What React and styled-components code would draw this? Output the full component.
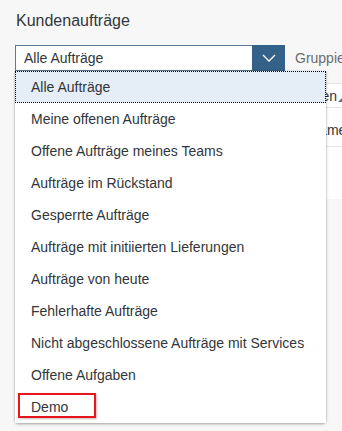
import React from "react";
import styled, { createGlobalStyle } from "styled-components";

const Global = createGlobalStyle`
  html, body { margin: 0; padding: 0; background: #f7f7f7; }
  body { font-family: "Liberation Sans", Arial, sans-serif; color: #32363a; }
  * { box-sizing: border-box; }
`;

const Page = styled.div`
  position: relative;
  width: 342px;
  height: 431px;
  overflow: hidden;
  padding: 12px 0 0 15px;
`;

const Title = styled.h1`
  margin: 0 0 0 1px;
  font-size: 16px;
  font-weight: normal;
  line-height: 18px;
  color: #32363a;
`;

const Toolbar = styled.div`
  display: flex;
  align-items: center;
  gap: 10px;
  margin-top: 15px;
  height: 26px;
  white-space: nowrap;
`;

const Select = styled.div`
  display: flex;
  flex-shrink: 0;
  width: 270px;
  height: 26px;
  border: 1px solid #5b7c99;
  background: #fff;
`;

const SelectValue = styled.div`
  flex: 1;
  display: flex;
  align-items: center;
  padding-left: 8px;
  font-size: 14px;
  color: #32363a;
`;

const SelectButton = styled.div`
  width: 33px;
  margin: -1px -1px -1px 0;
  background: #346187;
  display: flex;
  align-items: center;
  justify-content: center;
`;

const Label = styled.span`
  flex-shrink: 0;
  font-size: 14px;
  color: #6a6d70;
`;

const Table = styled.div`
  margin-top: 12px;
  background: #fff;
  height: 116px;
  width: 400px;
  border-top: 1px solid #e5e5e5;
`;

const Row = styled.div`
  display: flex;
  align-items: center;
  height: ${(p) => p.$h}px;
  padding-top: ${(p) => p.$pt || 0}px;
  border-bottom: 1px solid #e5e5e5;
  font-size: 14px;
  color: #32363a;
  white-space: nowrap;
`;

const HeaderCell = styled.div`
  width: 322px;
  flex-shrink: 0;
  text-align: right;
  color: #32363a;
`;

const SortIcon = styled.span`
  display: inline-block;
  width: 0;
  height: 0;
  margin: 8px 0 0 1px;
  border-left: 5px solid transparent;
  border-bottom: 5px solid #6a6d70;
  align-self: center;
`;

const Cell = styled.div`
  padding-left: ${(p) => p.$indent}px;
`;

const Popup = styled.ul`
  position: absolute;
  left: 15px;
  top: 71px;
  width: 311px;
  margin: 0;
  padding: 0;
  list-style: none;
  background: #fff;
  border-radius: 0 0 4px 4px;
  box-shadow: 0 1px 3px rgba(0, 0, 0, 0.35), 0 0 1px rgba(0, 0, 0, 0.2);
`;

const Item = styled.li`
  position: relative;
  height: 32px;
  display: flex;
  align-items: center;
  padding-left: 16px;
  font-size: 14px;
  color: #32363a;
  white-space: nowrap;
  background: ${(p) => (p.$selected ? "#e5eef7" : "#fff")};
  outline: ${(p) => (p.$selected ? "1px dotted #000" : "none")};
  outline-offset: -1px;
`;

const Mark = styled.span`
  position: absolute;
  left: 3px;
  top: 2px;
  width: 78px;
  height: 25px;
  border: 2px solid #e8141e;
  box-shadow: 1px 1px 2px rgba(0, 0, 0, 0.25);
`;

const items = [
  "Alle Aufträge",
  "Meine offenen Aufträge",
  "Offene Aufträge meines Teams",
  "Aufträge im Rückstand",
  "Gesperrte Aufträge",
  "Aufträge mit initiierten Lieferungen",
  "Aufträge von heute",
  "Fehlerhafte Aufträge",
  "Nicht abgeschlossene Aufträge mit Services",
  "Offene Aufgaben",
  "Demo",
];

export default function App() {
  return (
    <>
      <Global />
      <Page>
        <Title>Kundenaufträge</Title>
        <Toolbar>
          <Select>
            <SelectValue>Alle Aufträge</SelectValue>
            <SelectButton>
              <svg width="14" height="8" viewBox="0 0 14 8">
                <path d="M1 1 L7 7 L13 1" fill="none" stroke="#fff" strokeWidth="1.3" />
              </svg>
            </SelectButton>
          </Select>
          <Label>Gruppieren</Label>
        </Toolbar>
        <Table>
          <Row $h={24}>
            <HeaderCell>Auftragspositionen</HeaderCell>
            <SortIcon />
          </Row>
          <Row $h={39} $pt={5}>
            <Cell $indent={294}>Name</Cell>
          </Row>
        </Table>
        <Popup>
          {items.map((t, i) => (
            <Item key={t} $selected={i === 0}>
              {t}
              {t === "Demo" && <Mark />}
            </Item>
          ))}
        </Popup>
      </Page>
    </>
  );
}
